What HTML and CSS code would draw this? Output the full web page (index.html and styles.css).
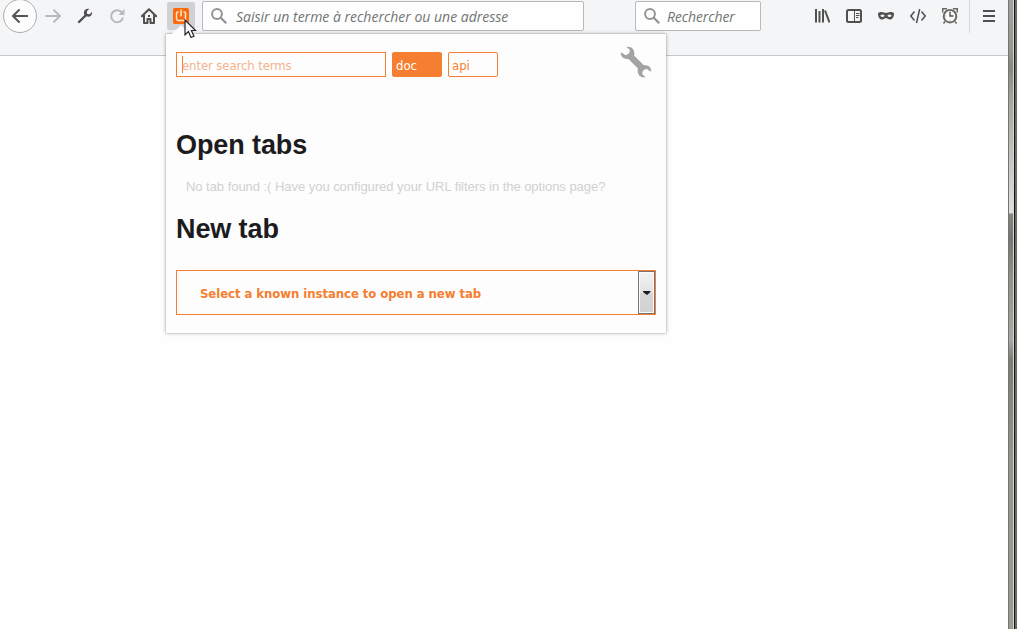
FILE: index.html
```html
<!DOCTYPE html>
<html lang="fr">
<head>
<meta charset="utf-8">
<title>Open tabs</title>
<link rel="stylesheet" href="styles.css">
</head>
<body>
<div class="screen">
  <main class="browser">
    <header class="toolbar">
      <span class="back"><svg class="icon" viewBox="0 0 16 16"><path d="M15.3 8H1.2M7 2 1 8l6 6" fill="none" stroke="#555" stroke-width="2" stroke-linecap="round" stroke-linejoin="round"/></svg></span>
      <span class="tool"><svg class="icon" viewBox="0 0 16 16"><path d="M1 8h13.8M9 2.2 15 8l-6 5.8" fill="none" stroke="#b8b9ba" stroke-width="2" stroke-linecap="round" stroke-linejoin="round"/></svg></span>
      <span class="tool"><svg class="icon" viewBox="0 0 16 16"><path d="M2 14 9 7" stroke="#505050" stroke-width="2.4" stroke-linecap="round"/><path d="M12.2.9 9.8 3.2l.3 2.7 2.7.3L15 3.8c.5 2.8-1.2 5-3.7 5-2.4 0-4.5-1.8-4.4-4.2C7 2 9.2.4 12.2.9Z" fill="#505050"/></svg></span>
      <span class="tool"><svg class="icon" viewBox="0 0 16 16"><path d="M13.1 4.8A6 6 0 1 0 14 9.5" fill="none" stroke="#b8b9ba" stroke-width="2"/><path d="M15.5.8V7H9.3Z" fill="#b8b9ba"/></svg></span>
      <span class="tool"><svg class="icon" viewBox="0 0 16 16"><path d="M.8 8.2 8 1.2l7.2 7M3 7.5V15h3.5v-4h3v4H13V7.5" fill="none" stroke="#505050" stroke-width="2" stroke-linecap="round" stroke-linejoin="round"/><path d="M7 7h2v2H7z" fill="#505050"/></svg></span>
      <span class="extension"><svg class="power" viewBox="0 0 16 16"><rect width="16" height="16" rx="2" fill="#fb6a0b"/><path d="M5.5 4H4.7Q3.500 4 3.500 5.200v5.600q0 1.700 1.700 1.700h5.600q1.700 0 1.700-1.700V5.200Q12.500 4 11.300 4h-.8M8 1.500V8.500" fill="none" stroke="#ffe8d4" stroke-width="1.5"/></svg></span>
      <div class="field address"><svg class="icon" viewBox="0 0 16 16"><circle cx="6" cy="6" r="4.9" fill="none" stroke="#939393" stroke-width="2"/><path d="m9.7 9.7 5.500 5.500" stroke="#939393" stroke-width="2.2"/></svg><span class="address-text">Saisir un terme à rechercher ou une adresse</span></div>
      <div class="field search"><svg class="icon" viewBox="0 0 16 16"><circle cx="6" cy="6" r="4.9" fill="none" stroke="#939393" stroke-width="2"/><path d="m9.7 9.7 5.500 5.500" stroke="#939393" stroke-width="2.2"/></svg><span class="search-text">Rechercher</span></div>
      <div class="actions">
        <span class="tool"><svg class="icon" viewBox="0 0 16 16"><path d="M2 1v13.5M5.500 3v11.500M9 1v13.500M11 2.500l4.500 12" fill="none" stroke="#505050" stroke-width="2"/></svg></span>
        <span class="tool"><svg class="icon" viewBox="0 0 16 16"><rect x="1" y="2" width="14" height="12" rx="1.5" fill="none" stroke="#505050" stroke-width="2"/><path d="M8.5 2v12" stroke="#505050"/><path d="M10 5.500h3.500M10 7.500h3.500M10 9.500h2.500" stroke="#505050"/></svg></span>
        <span class="tool"><svg class="icon" viewBox="0 0 16 16"><path fill-rule="evenodd" d="M0 5.500c0-1.500 4-2 6-1q2 .9 4 0c2-1 6-.5 6 1 0 3.500-1.500 6-4 6-2 0-3-1.500-4-1.500s-2 1.500-4 1.500c-2.500 0-4-2.500-4-6ZM2.200 7.800Q4.500 10.200 6.800 7.800 4.500 5 2.200 7.800Zm7 0q2.300 2.400 4.600 0Q11.500 5 9.200 7.800Z" fill="#505050"/></svg></span>
        <span class="tool"><svg class="icon" viewBox="0 0 16 16"><path d="M4.500 3.500.8 8l3.700 4.500M11.500 3.500 15.200 8l-3.700 4.500M9.700 1 6.500 15" fill="none" stroke="#505050" stroke-width="1.5"/></svg></span>
        <span class="tool"><svg class="icon" viewBox="0 0 16 16"><circle cx="8" cy="8.2" r="6.3" fill="#fafafa" stroke="#686860" stroke-width="1.9"/><path d="M.7 4.500V.8h4.300M15.300 4.500V.8H11M3 13.500l-1.500 2M13 13.500l1.500 2" fill="none" stroke="#686860" stroke-width="1.5"/><path d="M8 4v4h3.500" fill="none" stroke="#505050" stroke-width="1.4"/><path d="M8 2.500v1M8 12.500v1M2.700 8h1" stroke="#777"/></svg></span>
        <span class="divider"></span>
        <span class="tool"><svg class="icon" viewBox="0 0 16 16"><path d="M2 3h12M2 8h12M2 13h12" stroke="#505050" stroke-width="2"/></svg></span>
      </div>
    </header>
  </main>
  <aside class="window-edge"></aside>
</div>

<section class="popup">
  <svg class="popup-arrow" viewBox="0 0 20 10"><path d="M0 10 10 0l10 10Z" fill="#fdfdfd"/></svg>
  <div class="filters">
    <div class="terms"><span class="terms-text">enter search terms</span></div>
    <span class="tag tag-active">doc</span>
    <span class="tag">api</span>
    <svg class="options" viewBox="0 0 32 32"><path d="m8 8 16 16" stroke="#a2a4a2" stroke-width="6.5"/><path d="M6.500 1C12-.5 16 5 13.700 10.500 11 14 5 13.500 2.500 11.200 1 9.500.8 8 .8 6.200l5 3 3.700-1.500.2-3.900ZM25.500 31C20 32.500 16 27 18.300 21.500 21 18 27 18.500 29.500 20.800 31 22.500 31.200 24 31.200 25.800l-5-3-3.700 1.500-.2 3.900Z" fill="#a2a4a2"/></svg>
  </div>
  <h1 class="heading heading-open">Open tabs</h1>
  <p class="empty">No tab found :( Have you configured your URL filters in the options page?</p>
  <h1 class="heading">New tab</h1>
  <div class="select">
    <span class="select-text">Select a known instance to open a new tab</span>
    <span class="select-button"><svg class="caret" viewBox="0 0 8 4"><path d="M0 0h7.500v1L4 4 0 1Z" fill="#1b1b20"/></svg></span>
  </div>
</section>

<svg class="cursor" viewBox="0 0 13 20"><path d="M1 1v14.800l3.500-3.300 2.500 6 3-1.300-2.600-5.700h4.200Z" fill="#fdfdfd" stroke="#252530" stroke-width="1.2"/></svg>
</body>
</html>
```

FILE: styles.css
```css
* { box-sizing: border-box; }

body {
  margin: 0;
  overflow: hidden;
  background: #fefefe;
  font-family: "Liberation Sans", sans-serif;
}

.screen { display: flex; height: 629px; }
.browser { width: 1008px; }

.toolbar {
  display: flex;
  align-items: flex-start;
  height: 56px;
  padding-left: 3px;
  background: #f4f5f7;
  border-bottom: 1px solid #c6c7c8;
}

.icon { display: block; width: 16px; height: 16px; flex: none; }

.back, .tool, .extension {
  display: flex;
  flex: none;
  align-items: center;
  justify-content: center;
}
.back {
  width: 34px;
  height: 34px;
  margin-top: -1px;
  border: 1px solid #aaabac;
  border-radius: 50%;
  background: #fdfdfd;
}
.tool { width: 32px; height: 32px; }
.extension {
  width: 28px;
  height: 28px;
  margin: 2px 7px 0 2px;
  border-radius: 2px;
  background: #d0d1d2;
}
.power { width: 16px; height: 16px; }

.field {
  display: flex;
  flex: none;
  align-items: center;
  height: 30px;
  margin-top: 1px;
  padding-left: 8px;
  border: 1px solid #b7b9ba;
  border-radius: 2px;
  background: #fefefe;
  color: #707573;
  font: italic 14px/28px "Open Sans", "Noto Sans", sans-serif;
  white-space: nowrap;
}
.address { width: 382px; }
.search { width: 126px; margin-left: 51px; }
.address-text { margin: 2px 0 0 9px; }
.search-text { margin: 2px 0 0 7px; letter-spacing: -0.1px; }

.actions { display: flex; margin-left: 45px; }
.divider { width: 1px; height: 33px; margin: 0 3px; background: #d7d8d9; }

.window-edge {
  width: 9px;
  border-left: 1px solid #737571;
  background:
    linear-gradient(90deg, transparent 4px, #d6d7d4 4px 5px, #151817 5px 6px, #666a61 6px),
    linear-gradient(#a0a39f 0, #969993 50px, #858883 67px, #a4a6a1 100px, #e0e1df 213px, #858681 214px, #777876 240px, #929389 280px, #a9aaa8 340px, #7c7d77 360px, #96968f 460px, #9c9c94 629px);
}

.popup {
  position: absolute;
  top: 34px;
  left: 166px;
  width: 500px;
  height: 299px;
  padding: 18px 10px;
  background: #fdfdfd;
  box-shadow: 0 0 0 1px rgba(0, 0, 0, .06), 0 0 4px rgba(0, 0, 0, .3);
}
.popup-arrow {
  position: absolute;
  top: -9px;
  left: 5px;
  width: 20px;
  height: 10px;
}

.filters { display: flex; height: 25px; align-items: flex-start; }
.terms, .tag {
  height: 25px;
  border: 1px solid #f57e30;
  color: #f57e30;
  font: 13px/25px "DejaVu Sans Condensed", "DejaVu Sans", sans-serif;
  font-stretch: condensed;
}
.terms { width: 210px; padding: 3px 0 0 5px; color: #f4b38c; }
.terms-text {
  display: block;
  height: 17px;
  border-left: 1px solid #f57e30;
  line-height: 19px;
  letter-spacing: -0.1px;
  text-indent: -1px;
}
.tag { width: 50px; margin-left: 6px; padding-left: 3px; border-radius: 2px; }
.tag-active { background: #f57e30; color: #fff; }
.options { width: 32px; height: 32px; margin: -6px 0 0 122px; flex: none; }

.heading {
  margin: 0;
  color: #1c1c20;
  font-size: 27px;
  line-height: 32px;
  letter-spacing: -0.1px;
}
.heading-open { margin-top: 52px; }
.empty {
  margin: 18px 0 18px 10px;
  color: #d0d1d0;
  font-size: 13px;
  line-height: 16px;
  letter-spacing: -0.04px;
  white-space: nowrap;
}

.select {
  display: flex;
  justify-content: space-between;
  width: 480px;
  height: 45px;
  margin-top: 25px;
  padding-left: 23px;
  border: 1px solid #f57e30;
  color: #f57e30;
  font: bold 13px/45px "DejaVu Sans Condensed", "DejaVu Sans", sans-serif;
  font-stretch: condensed;
  letter-spacing: -0.06px;
  white-space: nowrap;
}
.select-button {
  display: flex;
  align-items: center;
  justify-content: center;
  width: 17px;
  border: 1px solid #747574;
  box-shadow: inset 0 0 0 1px #fafafa;
  background: linear-gradient(#f1f2f1, #e3e4e3 50%, #d6d7d6 50%, #d0d1d0);
}
.caret { width: 8px; height: 4px; }

.cursor {
  position: absolute;
  top: 19px;
  left: 184px;
  width: 13px;
  height: 20px;
}
```
